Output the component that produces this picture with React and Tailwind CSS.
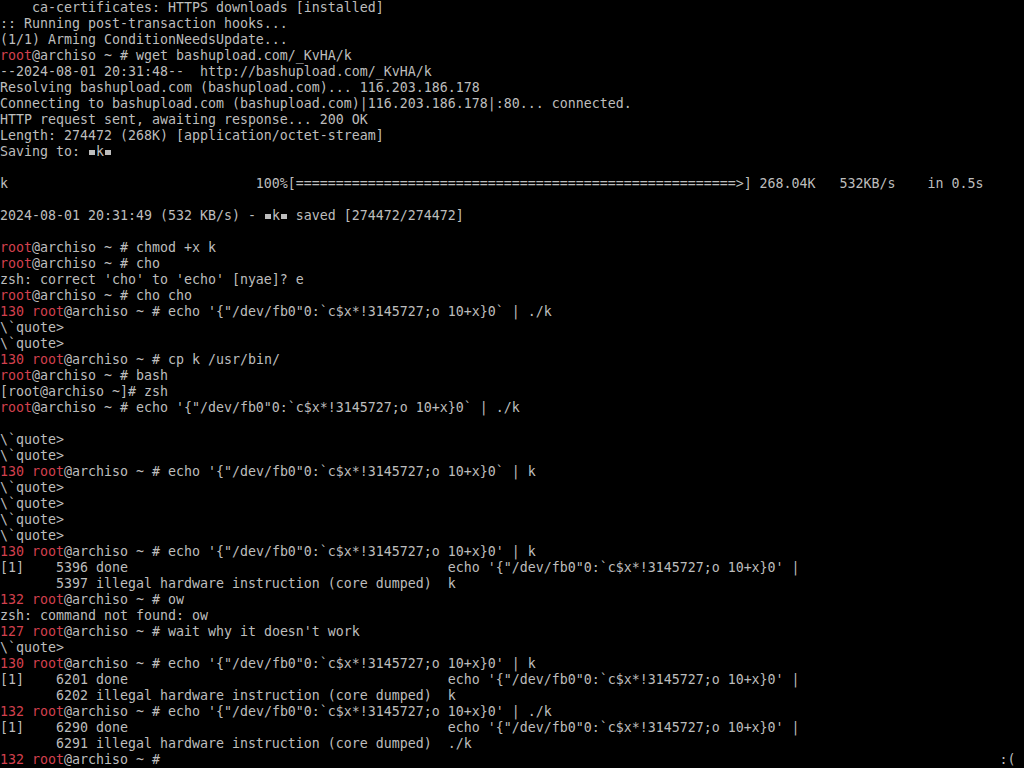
import React from "react";

const R = "text-[#d3404e]";

function Sq() {
  return (
    <span className="relative inline-block h-[16px] w-[8px] align-top">
      <span className="absolute left-[1px] top-[6px] h-[5px] w-[6px] bg-[#bdbdbd]" />
    </span>
  );
}

function Prompt({ code, cmd }) {
  return (
    <>
      {code ? <span className={R}>{code} </span> : null}
      <span className={R}>root</span>
      {"@archiso ~ # " + cmd}
    </>
  );
}

const CMD1 = "echo '{\"/dev/fb0\"0:`c$x*!3145727;o 10+x}0`";
const CMD2 = "echo '{\"/dev/fb0\"0:`c$x*!3145727;o 10+x}0'";
const Q = "\\`quote>";

const done = (n) => ("[1]    " + n + " done").padEnd(56, " ") + CMD2 + " |";
const ill = (n, t) => ("       " + n + " illegal hardware instruction (core dumped)").padEnd(56, " ") + t;

const lines = [
  "    ca-certificates: HTTPS downloads [installed]",
  ":: Running post-transaction hooks...",
  "(1/1) Arming ConditionNeedsUpdate...",
  <Prompt cmd="wget bashupload.com/_KvHA/k" />,
  "--2024-08-01 20:31:48--  http://bashupload.com/_KvHA/k",
  "Resolving bashupload.com (bashupload.com)... 116.203.186.178",
  "Connecting to bashupload.com (bashupload.com)|116.203.186.178|:80... connected.",
  "HTTP request sent, awaiting response... 200 OK",
  "Length: 274472 (268K) [application/octet-stream]",
  <>
    {"Saving to: "}
    <Sq />k<Sq />
  </>,
  "",
  "k".padEnd(32, " ") + "100%[" + "=".repeat(55) + ">] 268.04K   532KB/s    in 0.5s",
  "",
  <>
    {"2024-08-01 20:31:49 (532 KB/s) - "}
    <Sq />k<Sq />
    {" saved [274472/274472]"}
  </>,
  "",
  <Prompt cmd="chmod +x k" />,
  <Prompt cmd="cho" />,
  "zsh: correct 'cho' to 'echo' [nyae]? e",
  <Prompt cmd="cho cho" />,
  <Prompt code="130" cmd={CMD1 + " | ./k"} />,
  Q,
  Q,
  <Prompt code="130" cmd="cp k /usr/bin/" />,
  <Prompt cmd="bash" />,
  "[root@archiso ~]# zsh",
  <Prompt cmd={CMD1 + " | ./k"} />,
  "",
  Q,
  Q,
  <Prompt code="130" cmd={CMD1 + " | k"} />,
  Q,
  Q,
  Q,
  Q,
  <Prompt code="130" cmd={CMD2 + " | k"} />,
  done(5396),
  ill(5397, "k"),
  <Prompt code="132" cmd="ow" />,
  "zsh: command not found: ow",
  <Prompt code="127" cmd="wait why it doesn't work" />,
  Q,
  <Prompt code="130" cmd={CMD2 + " | k"} />,
  done(6201),
  ill(6202, "k"),
  <Prompt code="132" cmd={CMD2 + " | ./k"} />,
  done(6290),
  ill(6291, "./k"),
  <>
    <Prompt code="132" cmd={" ".repeat(104)} />
    {":("}
  </>,
];

export default function App() {
  return (
    <div
      className="h-[768px] w-[1024px] overflow-hidden bg-black text-[13.29px] text-[#bdbdbd]"
      style={{ fontFamily: '"DejaVu Sans Mono", "Liberation Mono", monospace' }}
    >
      {lines.map((l, i) => (
        <div key={i} className="h-[16px] whitespace-pre leading-[16px]">
          {l}
        </div>
      ))}
    </div>
  );
}
